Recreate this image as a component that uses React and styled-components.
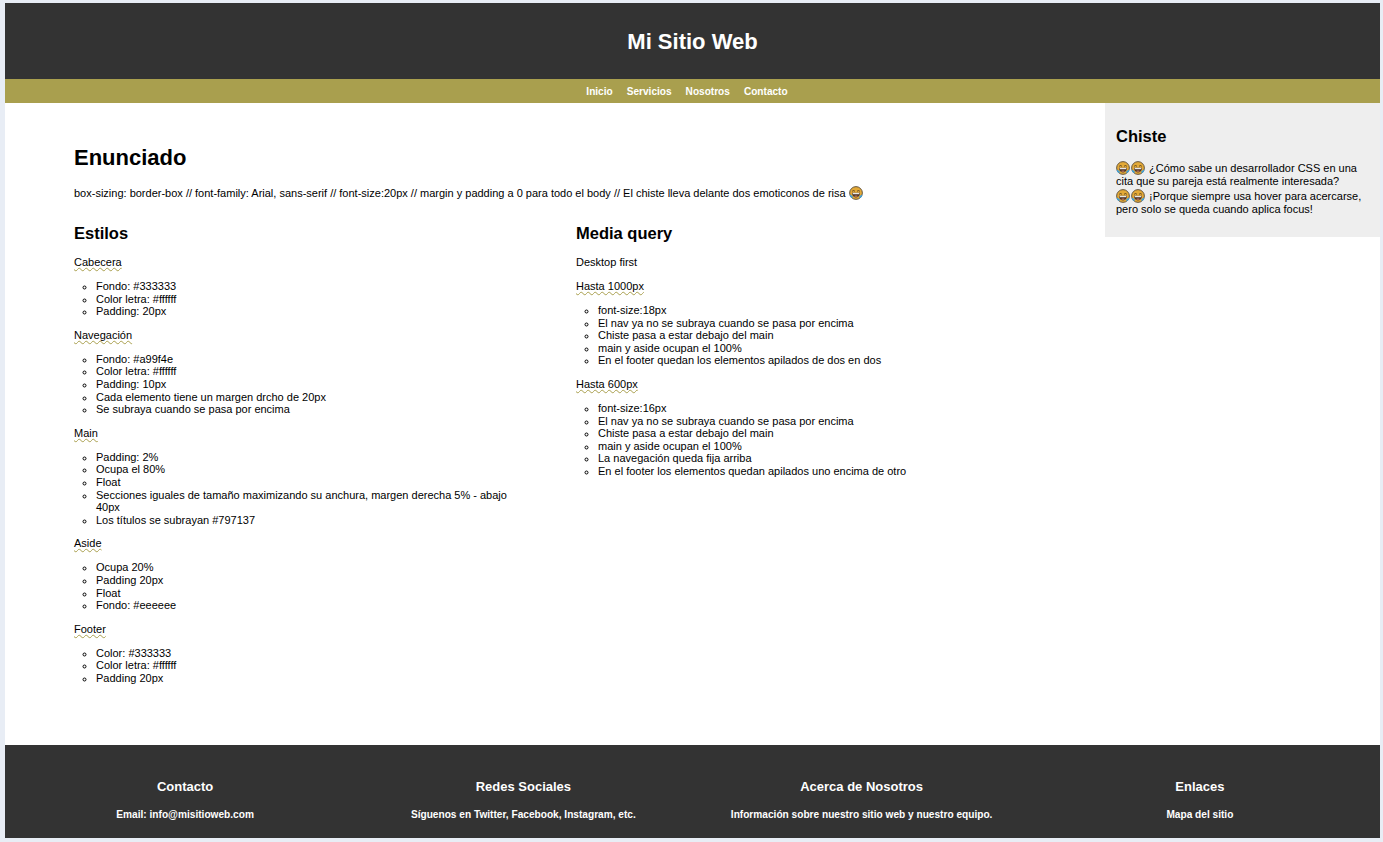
import React from 'react';
import styled, { createGlobalStyle } from 'styled-components';

const GlobalStyle = createGlobalStyle`
  * {
    box-sizing: border-box;
    margin: 0;
    padding: 0;
  }
  html, body {
    height: 100%;
  }
  body {
    background: #e8edf5;
    font-family: "Liberation Sans", Arial, sans-serif;
    font-size: 12px;
    line-height: 12.6px;
    color: #000;
    padding: 3px 3px 4px 5px;
    overflow: hidden;
  }
`;

const Page = styled.div`
  background: #fff;
  width: 1375px;
  height: 835px;
  display: flex;
  flex-direction: column;
`;

const Header = styled.header`
  background: #333333;
  color: #ffffff;
  height: 76px;
  display: flex;
  align-items: center;
  justify-content: center;
`;

const SiteTitle = styled.h1`
  font-size: 22px;
  line-height: 25px;
  font-weight: 700;
`;

const Nav = styled.nav`
  background: #a99f4e;
  height: 24px;
  display: flex;
  align-items: center;
  justify-content: center;
  gap: 14px;
  padding-right: 11px;
`;

const NavLink = styled.a`
  color: #ffffff;
  font-weight: 700;
  font-size: 10.1px;
  line-height: 13px;
`;

const Content = styled.div`
  flex: 1;
  display: flex;
  align-items: flex-start;
`;

const Main = styled.main`
  width: 1100px;
  padding: 42px 69px 0;
`;

const Title = styled.h2`
  font-size: 22px;
  line-height: 25px;
  font-weight: 700;
  margin-bottom: 16px;
`;

const Intro = styled.p`
  font-size: 11px;
  line-height: 14px;
  margin-bottom: 24px;
`;

const Columns = styled.div`
  display: flex;
`;

const Column = styled.section`
  flex: 0 0 502px;
  padding-right: 50px;
`;

const ColumnTitle = styled.h3`
  font-size: 16.5px;
  line-height: 19px;
  font-weight: 700;
  margin-bottom: 13px;
`;

const Label = styled.p`
  font-size: 11px;
  line-height: 13px;
  margin-bottom: 11px;
`;

const Wavy = styled.span`
  text-decoration: underline wavy #a99f4e 1px;
  text-decoration-skip-ink: none;
  text-underline-offset: 1px;
`;

const List = styled.ul`
  list-style: circle;
  padding-left: 22px;
  margin-bottom: 11px;
`;

const Item = styled.li`
  font-size: 11px;
  line-height: 12.6px;
`;

const Aside = styled.aside`
  width: 275px;
  height: 134px;
  background: #eeeeee;
  padding: 24px 11px 0;
`;

const AsideTitle = styled.h3`
  font-size: 16.5px;
  line-height: 19px;
  font-weight: 700;
  margin-bottom: 15px;
`;

const Joke = styled.p`
  font-size: 11px;
  line-height: 13.4px;
`;

const Emoji = styled.svg`
  display: inline-block;
  width: 14px;
  height: 14px;
  vertical-align: -3px;
  margin-right: 1px;
`;

const Footer = styled.footer`
  background: #333333;
  color: #ffffff;
  height: 93px;
  display: grid;
  grid-template-columns: repeat(4, 1fr);
  padding: 34px 11px 0;
`;

const FooterCol = styled.div`
  text-align: center;
`;

const FooterTitle = styled.h4`
  font-size: 13px;
  line-height: 16px;
  font-weight: 700;
  margin-bottom: 13px;
`;

const FooterText = styled.p`
  font-size: 10.15px;
  line-height: 13px;
  font-weight: 700;
`;

const Laugh = () => (
  <Emoji viewBox="0 0 16 16" aria-hidden="true">
    <circle cx="8" cy="8" r="7.3" fill="#e3a937" stroke="#55493a" strokeWidth="1" />
    <path d="M3.6 6 Q5.2 4.4 6.8 6 M9.2 6 Q10.8 4.4 12.4 6" fill="none" stroke="#4a3a20" strokeWidth="1" />
    <path d="M3.4 7.8 H12.6 Q12.4 12.8 8 13 Q3.6 12.8 3.4 7.8 Z" fill="#4a3226" />
    <path d="M4.2 7.8 H11.8 V9.4 H4.2 Z" fill="#e8e8e8" />
    <path d="M6 11.2 Q8 10.2 10 11.2 L9.6 12.6 H6.4 Z" fill="#a86a52" />
    <path d="M0.8 9.6 Q0.8 13 3.4 13.8 Q5 13.4 4 11.4 Z M15.2 9.6 Q15.2 13 12.6 13.8 Q11 13.4 12 11.4 Z" fill="#3f9fd8" />
  </Emoji>
);

const estilos = [
  ['Cabecera', ['Fondo: #333333', 'Color letra: #ffffff', 'Padding: 20px']],
  ['Navegación', ['Fondo: #a99f4e', 'Color letra: #ffffff', 'Padding: 10px', 'Cada elemento tiene un margen drcho de 20px', 'Se subraya cuando se pasa por encima']],
  ['Main', ['Padding: 2%', 'Ocupa el 80%', 'Float', 'Secciones iguales de tamaño maximizando su anchura, margen derecha 5% - abajo 40px', 'Los títulos se subrayan #797137']],
  ['Aside', ['Ocupa 20%', 'Padding 20px', 'Float', 'Fondo: #eeeeee']],
  ['Footer', ['Color: #333333', 'Color letra: #ffffff', 'Padding 20px']],
];

const media = [
  ['Hasta 1000px', ['font-size:18px', 'El nav ya no se subraya cuando se pasa por encima', 'Chiste pasa a estar debajo del main', 'main y aside ocupan el 100%', 'En el footer quedan los elementos apilados de dos en dos']],
  ['Hasta 600px', ['font-size:16px', 'El nav ya no se subraya cuando se pasa por encima', 'Chiste pasa a estar debajo del main', 'main y aside ocupan el 100%', 'La navegación queda fija arriba', 'En el footer los elementos quedan apilados uno encima de otro']],
];

const footer = [
  ['Contacto', 'Email: info@misitioweb.com'],
  ['Redes Sociales', 'Síguenos en Twitter, Facebook, Instagram, etc.'],
  ['Acerca de Nosotros', 'Información sobre nuestro sitio web y nuestro equipo.'],
  ['Enlaces', 'Mapa del sitio'],
];

const Groups = ({ groups }) =>
  groups.map(([name, items]) => (
    <div key={name}>
      <Label><Wavy>{name}</Wavy></Label>
      <List>
        {items.map(item => <Item key={item}>{item}</Item>)}
      </List>
    </div>
  ));

const App = () => (
  <>
    <GlobalStyle />
    <Page>
      <Header><SiteTitle>Mi Sitio Web</SiteTitle></Header>
      <Nav>
        {['Inicio', 'Servicios', 'Nosotros', 'Contacto'].map(link => <NavLink key={link}>{link}</NavLink>)}
      </Nav>
      <Content>
        <Main>
          <Title>Enunciado</Title>
          <Intro>
            box-sizing: border-box // font-family: Arial, sans-serif // font-size:20px // margin y padding a 0 para todo el body // El chiste lleva delante dos emoticonos de risa <Laugh />
          </Intro>
          <Columns>
            <Column>
              <ColumnTitle>Estilos</ColumnTitle>
              <Groups groups={estilos} />
            </Column>
            <Column>
              <ColumnTitle>Media query</ColumnTitle>
              <Label>Desktop first</Label>
              <Groups groups={media} />
            </Column>
          </Columns>
        </Main>
        <Aside>
          <AsideTitle>Chiste</AsideTitle>
          <Joke>
            <Laugh /><Laugh /> ¿Cómo sabe un desarrollador CSS en una cita que su pareja está realmente interesada?
            <br />
            <Laugh /><Laugh /> ¡Porque siempre usa hover para acercarse, pero solo se queda cuando aplica focus!
          </Joke>
        </Aside>
      </Content>
      <Footer>
        {footer.map(([title, text]) => (
          <FooterCol key={title}>
            <FooterTitle>{title}</FooterTitle>
            <FooterText>{text}</FooterText>
          </FooterCol>
        ))}
      </Footer>
    </Page>
  </>
);

export default App;
